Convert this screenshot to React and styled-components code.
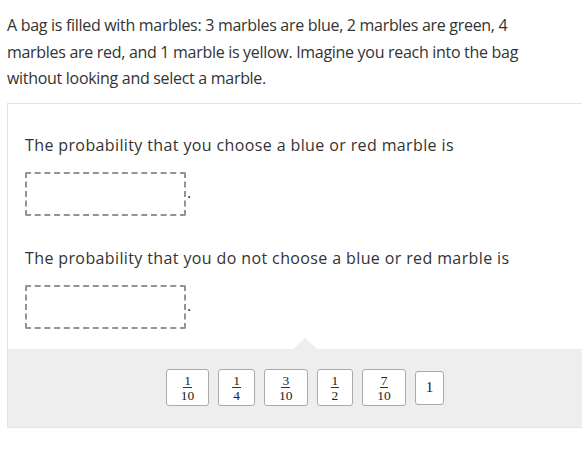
import React from "react";
import styled, { createGlobalStyle } from "styled-components";

const GlobalStyle = createGlobalStyle`
  html, body {
    margin: 0;
    padding: 0;
    background: #fff;
  }
  body {
    font-family: "Open Sans", "Liberation Sans", sans-serif;
    color: #333;
  }
`;

const Page = styled.div`
  padding: 12px 0 0 7px;
  overflow: hidden;
`;

const Intro = styled.p`
  margin: 0;
  width: 540px;
  font-size: 16px;
  letter-spacing: -0.3px;
  line-height: 26.5px;
`;

const Card = styled.div`
  margin-top: 11px;
  width: 594px;
  border: 1px solid #e3e3e3;
  background: #fff;
`;

const Questions = styled.div`
  padding: 28px 17px 20px;
  display: flex;
  flex-direction: column;
  gap: 29px;
`;

const Question = styled.div`
  display: flex;
  flex-direction: column;
  gap: 14px;
`;

const Prompt = styled.div`
  font-size: 16px;
  letter-spacing: 0.38px;
  line-height: 26px;
`;

const AnswerRow = styled.div`
  display: flex;
  align-items: center;
`;

const DropBox = styled.div`
  width: 157px;
  height: 40px;
  border: 2px dashed #949494;
  border-radius: 2px;
`;

const Period = styled.span`
  font-size: 16px;
  line-height: 16px;
  margin: -3px 0 0 1px;
`;

const Tray = styled.div`
  position: relative;
  height: 78px;
  background: #eee;
  display: flex;
  align-items: center;
  justify-content: center;
  gap: 9px;

  &::before {
    content: "";
    position: absolute;
    top: -11px;
    left: 50%;
    margin-left: -12px;
    border-left: 12px solid transparent;
    border-right: 12px solid transparent;
    border-bottom: 11px solid #eee;
  }
`;

const Tile = styled.div`
  height: ${({ $small }) => ($small ? "32px" : "35px")};
  padding: 0 ${({ $small }) => ($small ? "10px" : "13px")};
  background: #fff;
  border: 1px solid #aaa;
  border-radius: 3px;
  display: flex;
  align-items: center;
  justify-content: center;
  font-family: "Liberation Serif", "DejaVu Serif", serif;
  color: #222;
`;

const Fraction = styled.span`
  display: inline-flex;
  flex-direction: column;
  align-items: center;
  font-size: 13.5px;
  line-height: 11px;
`;

const Num = styled.span`
  padding: 0 1px 1px;
  border-bottom: 1px solid #333;
`;

const Den = styled.span`
  padding: 2px 1px 0;
`;

const Whole = styled.span`
  font-size: 15px;
`;

const tiles = [
  ["1", "10"],
  ["1", "4"],
  ["3", "10"],
  ["1", "2"],
  ["7", "10"],
];

export default function App() {
  return (
    <>
      <GlobalStyle />
      <Page>
        <Intro>
          A bag is filled with marbles: 3 marbles are blue, 2 marbles are green, 4
          marbles are red, and 1 marble is yellow. Imagine you reach into the bag
          without looking and select a marble.
        </Intro>
        <Card>
          <Questions>
            <Question>
              <Prompt>The probability that you choose a blue or red marble is</Prompt>
              <AnswerRow>
                <DropBox />
                <Period>.</Period>
              </AnswerRow>
            </Question>
            <Question>
              <Prompt>The probability that you do not choose a blue or red marble is</Prompt>
              <AnswerRow>
                <DropBox />
                <Period>.</Period>
              </AnswerRow>
            </Question>
          </Questions>
          <Tray>
            {tiles.map(([n, d], i) => (
              <Tile key={i}>
                <Fraction>
                  <Num>{n}</Num>
                  <Den>{d}</Den>
                </Fraction>
              </Tile>
            ))}
            <Tile $small>
              <Whole>1</Whole>
            </Tile>
          </Tray>
        </Card>
      </Page>
    </>
  );
}
